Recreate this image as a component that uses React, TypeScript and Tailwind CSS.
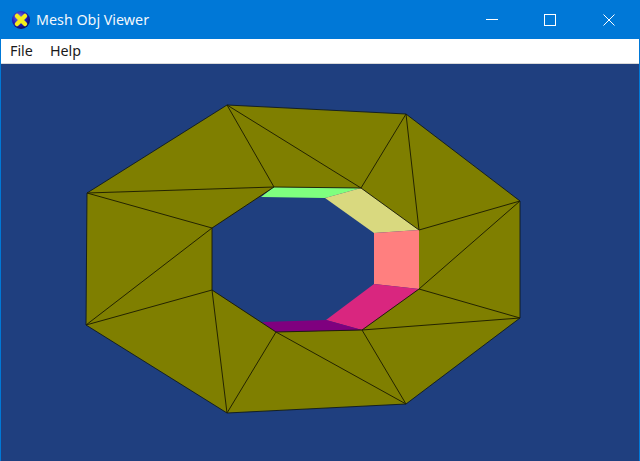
const outer = [
  [227, 105],
  [406, 114],
  [520, 201],
  [520, 318],
  [406, 404],
  [227, 413],
  [86, 325],
  [87, 193],
];

const inner = [
  [274, 187],
  [361, 188],
  [419, 230],
  [419, 289],
  [362, 330],
  [276, 332],
  [212, 290],
  [212, 228],
];

// each outer corner joins two inner corners
const spokes = [
  [0, 0],
  [0, 1],
  [1, 1],
  [1, 2],
  [2, 2],
  [2, 3],
  [3, 3],
  [3, 4],
  [4, 4],
  [4, 5],
  [5, 5],
  [5, 6],
  [6, 6],
  [6, 7],
  [7, 7],
  [7, 0],
];

const walls = [
  { fill: "#7fff7f", points: "274,187 361,188 325,198 261,197" },
  { fill: "#d9d97f", points: "361,188 419,230 374,233 325,198" },
  { fill: "#ff7f7f", points: "419,230 419,289 374,284 374,233" },
  { fill: "#d9267f", points: "419,289 362,330 326,320 374,284" },
  { fill: "#7f007f", points: "262,322 326,320 362,330 276,332" },
];

const toPoints = (list: number[][]) => list.map((p) => p.join(",")).join(" ");

function AppIcon() {
  return (
    <svg width="20" height="20" viewBox="0 0 20 20" className="mr-[5px] shrink-0">
      <defs>
        <radialGradient id="ball" cx="40%" cy="35%" r="70%">
          <stop offset="0%" stopColor="#8a7ce0" />
          <stop offset="60%" stopColor="#1f18b8" />
          <stop offset="100%" stopColor="#0a0a50" />
        </radialGradient>
      </defs>
      <circle cx="10" cy="10" r="9" fill="url(#ball)" />
      <path d="M6 6 L14 14 M14 6 L6 14" stroke="#f5ee1c" strokeWidth="4.5" strokeLinecap="round" />
    </svg>
  );
}

function WindowButtons() {
  return (
    <div className="flex h-full pt-[1px] text-white">
      <div className="flex w-[58px] items-center justify-center">
        <svg width="12" height="12" viewBox="0 0 12 12">
          <path d="M0 5.5 H12" stroke="currentColor" fill="none" />
        </svg>
      </div>
      <div className="flex w-[58px] items-center justify-center">
        <svg width="12" height="12" viewBox="0 0 12 12">
          <rect x="0.5" y="0.5" width="11" height="11" stroke="currentColor" fill="none" />
        </svg>
      </div>
      <div className="flex w-[60px] items-center justify-center">
        <svg width="12" height="12" viewBox="0 0 12 12">
          <path d="M0.5 0.5 L11.5 11.5 M11.5 0.5 L0.5 11.5" stroke="currentColor" fill="none" />
        </svg>
      </div>
    </div>
  );
}

function Mesh() {
  return (
    <svg viewBox="1 64 638 397" className="block h-full w-full">
      <polygon points={toPoints(outer)} fill="#7f7f00" />
      <polygon points={toPoints(inner)} fill="#1f3f7f" />
      {walls.map((w) => (
        <polygon key={w.fill} points={w.points} fill={w.fill} />
      ))}
      <g stroke="#1a1a00" strokeWidth="1" fill="none" opacity="0.9">
        <polygon points={toPoints(outer)} stroke="#0f1a20" />
        <polyline points={toPoints([inner[7], inner[0], inner[1], inner[2]])} />
        <polyline points={toPoints([inner[3], inner[4], inner[5], inner[6], inner[7]])} />
        {spokes.map(([o, i]) => (
          <line
            key={`${o}-${i}`}
            x1={outer[o][0]}
            y1={outer[o][1]}
            x2={inner[i][0]}
            y2={inner[i][1]}
          />
        ))}
      </g>
    </svg>
  );
}

export default function App() {
  return (
    <div className="flex h-[461px] w-[640px] flex-col overflow-hidden border-x border-[#0078d7] bg-[#0078d7] font-['Noto_Sans','Liberation_Sans',sans-serif]">
      <div className="flex h-[39px] shrink-0 items-center justify-between pl-[10px]">
        <div className="flex items-center text-[14.3px] text-[#f2f7fc]">
          <AppIcon />
          <span>Mesh Obj Viewer</span>
        </div>
        <WindowButtons />
      </div>
      <div className="flex h-[25px] shrink-0 items-center gap-[17px] border-b border-[#d9d9d9] bg-white pb-[1px] pl-[9px] text-[14.3px] text-[#1a1a1a]">
        <span>File</span>
        <span>Help</span>
      </div>
      <div className="min-h-0 flex-1 bg-[#1f3f7f]">
        <Mesh />
      </div>
    </div>
  );
}
